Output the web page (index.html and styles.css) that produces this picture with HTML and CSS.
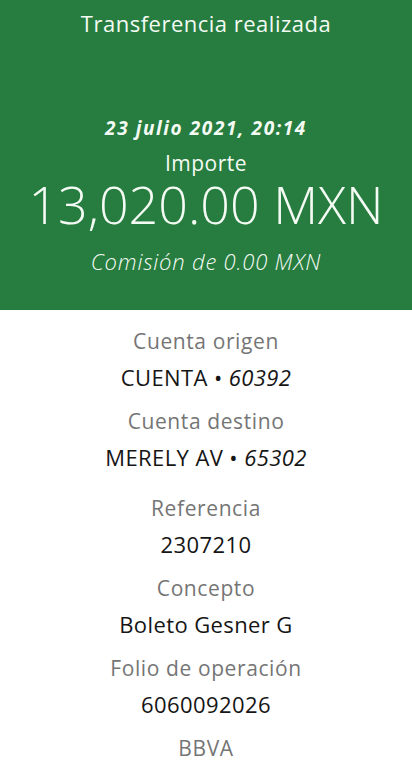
FILE: index.html
```html
<!DOCTYPE html>
<html lang="es">
<head>
  <meta charset="UTF-8">
  <title>Transferencia realizada</title>
  <link rel="stylesheet" href="styles.css">
</head>
<body>

  <header class="summary">
    <h1 class="summary-title">Transferencia realizada</h1>
    <div class="summary-date">23 julio 2021, 20:14</div>
    <div class="summary-label">Importe</div>
    <div class="summary-amount">13,020.00 MXN</div>
    <div class="summary-fee">Comisión de 0.00 MXN</div>
  </header>

  <main class="details">
    <div class="field">
      <div class="field-label">Cuenta origen</div>
      <div class="field-value">CUENTA • <em>60392</em></div>
    </div>
    <div class="field field-wide">
      <div class="field-label">Cuenta destino</div>
      <div class="field-value">MERELY AV • <em>65302</em></div>
    </div>
    <div class="field">
      <div class="field-label">Referencia</div>
      <div class="field-value">2307210</div>
    </div>
    <div class="field">
      <div class="field-label">Concepto</div>
      <div class="field-value">Boleto Gesner G</div>
    </div>
    <div class="field">
      <div class="field-label">Folio de operación</div>
      <div class="field-value">6060092026</div>
    </div>
    <div class="field">
      <div class="field-label">BBVA</div>
    </div>
  </main>

</body>
</html>
```

FILE: styles.css
```css
body {
  margin: 0;
  background-color: #fff;
  font-family: 'Open Sans', Roboto, sans-serif;
  text-align: center;
}

.summary {
  background-color: #277c3f;
  color: #f4fbf4;
  height: 310px;
  box-sizing: border-box;
  padding-top: 8px;
}
.summary-title {
  margin: 0;
  font-size: 22px;
  font-weight: 400;
  letter-spacing: 0.5px;
  line-height: 30px;
}
.summary-date {
  margin-top: 75px;
  font-size: 19px;
  font-weight: 700;
  font-style: italic;
  letter-spacing: 1.6px;
  line-height: 30px;
}
.summary-label {
  margin-top: 6px;
  font-size: 21px;
  letter-spacing: 0.5px;
  line-height: 28px;
}
.summary-amount {
  font-size: 52px;
  font-weight: 300;
  line-height: 54px;
}
.summary-fee {
  margin-top: 14px;
  font-size: 22px;
  font-style: italic;
  font-weight: 300;
  letter-spacing: 0.8px;
  line-height: 32px;
}

.details {
  padding-top: 14px;
}
.field {
  margin-bottom: 8px;
}
.field-wide {
  margin-bottom: 15px;
}
.field-label {
  font-size: 21px;
  letter-spacing: 0.6px;
  color: #757575;
  line-height: 34px;
}
.field-value {
  font-size: 22px;
  letter-spacing: 0.4px;
  color: #151515;
  line-height: 38px;
}
.field-value em {
  font-style: italic;
}
```
